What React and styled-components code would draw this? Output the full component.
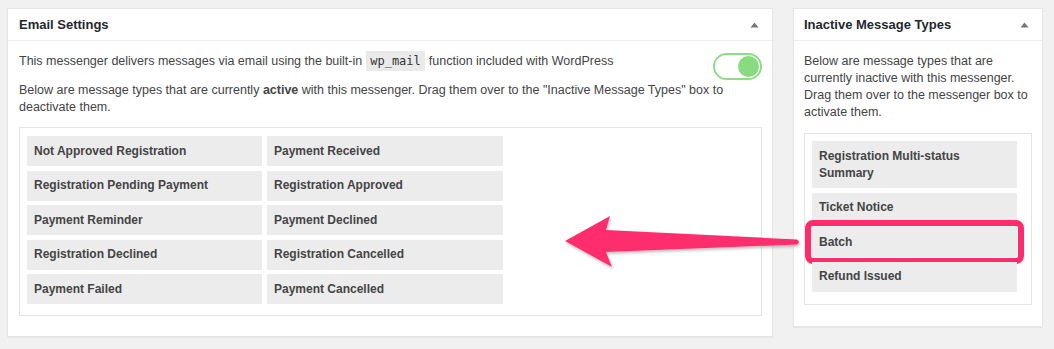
import React from "react";
import styled, { createGlobalStyle } from "styled-components";

const GlobalStyle = createGlobalStyle`
  body {
    margin: 0;
    background: #f1f1f1;
    font-family: "Liberation Sans", Arial, sans-serif;
    color: #444;
  }
`;

const Page = styled.div`
  position: relative;
  width: 1054px;
  height: 349px;
  box-sizing: border-box;
  padding: 8px 0 0 7px;
  display: flex;
  align-items: flex-start;
  gap: 20px;
`;

const Panel = styled.div`
  width: ${(p) => p.width}px;
  box-sizing: border-box;
  background: #fff;
  border: 1px solid #e5e5e5;
  box-shadow: 0 1px 1px rgba(0, 0, 0, 0.04);
  padding-bottom: ${(p) => p.bottom}px;
`;

const PanelHeader = styled.div`
  height: 31px;
  border-bottom: 1px solid #eee;
  display: flex;
  align-items: center;
  justify-content: space-between;
  padding: 0 13px 0 ${(p) => p.left}px;
`;

const Title = styled.h2`
  margin: 0;
  font-size: 13px;
  font-weight: 700;
  color: #23282d;
`;

const Body = styled.div`
  padding: 12px ${(p) => p.right}px 0 ${(p) => p.left}px;
`;

const TopRow = styled.div`
  display: flex;
  justify-content: space-between;
  align-items: flex-start;
`;

const Text = styled.p`
  margin: 0;
  font-size: 12.5px;
  line-height: 17px;
  color: #444;
  padding-top: ${(p) => p.top || 0}px;
`;

const Code = styled.code`
  font-family: "DejaVu Sans Mono", "Liberation Mono", monospace;
  font-size: 12px;
  background: #eaeaea;
  padding: 3px 4px;
  margin: 0 4px;
  color: #333;
`;

const Toggle = styled.div`
  width: 49px;
  height: 27px;
  box-sizing: border-box;
  border: 2px solid #8fdc87;
  border-radius: 14px;
  display: flex;
  align-items: center;
  justify-content: flex-end;
  padding-right: 1px;
`;

const Knob = styled.div`
  width: 21px;
  height: 21px;
  border-radius: 50%;
  background: #88dc7f;
`;

const TypeBox = styled.div`
  border: 1px solid #e5e5e5;
  margin-top: ${(p) => p.top}px;
  padding: ${(p) => p.pad};
  display: grid;
  grid-template-columns: ${(p) => p.cols};
  column-gap: 5px;
  row-gap: 4.5px;
`;

const TypeItem = styled.div`
  background: #ececec;
  font-size: 12px;
  font-weight: 700;
  color: #444;
  line-height: 17px;
  padding: 6.5px 7px;
  ${(p) =>
    p.highlight &&
    `
    outline: 6px solid #fe2c6c;
    outline-offset: 1px;
    border-radius: 1px;
  `}
`;

const Arrow = styled.svg`
  position: absolute;
  left: 555px;
  top: 205px;
  pointer-events: none;
  overflow: visible;
`;

const Caret = () => (
  <svg width="9" height="6" viewBox="0 0 9 6">
    <path d="M0.5 5.5 L4.5 0.5 L8.5 5.5 Z" fill="#72777c" />
  </svg>
);

const active = [
  "Not Approved Registration",
  "Payment Received",
  "Registration Pending Payment",
  "Registration Approved",
  "Payment Reminder",
  "Payment Declined",
  "Registration Declined",
  "Registration Cancelled",
  "Payment Failed",
  "Payment Cancelled",
];

const inactive = ["Registration Multi-status Summary", "Ticket Notice", "Batch", "Refund Issued"];

export default function App() {
  return (
    <>
      <GlobalStyle />
      <Page>
        <Panel width={766} bottom={20}>
          <PanelHeader left={11}>
            <Title>Email Settings</Title>
            <Caret />
          </PanelHeader>
          <Body left={11} right={10}>
            <TopRow>
              <Text>
                This messenger delivers messages via email using the built-in<Code>wp_mail</Code>
                function included with WordPress
              </Text>
              <Toggle>
                <Knob />
              </Toggle>
            </TopRow>
            <Text top={2}>
              Below are message types that are currently <b>active</b> with this messenger. Drag them
              over to the "Inactive Message Types" box to deactivate them.
            </Text>
            <TypeBox top={11} pad="8px 7px 11px" cols="235px 236px">
              {active.map((t) => (
                <TypeItem key={t}>{t}</TypeItem>
              ))}
            </TypeBox>
          </Body>
        </Panel>
        <Panel width={250} bottom={21}>
          <PanelHeader left={10}>
            <Title>Inactive Message Types</Title>
            <Caret />
          </PanelHeader>
          <Body left={10} right={10}>
            <Text>
              Below are message types that are currently inactive with this messenger. Drag them over
              to the messenger box to activate them.
            </Text>
            <TypeBox top={12} pad="7px 14px 12px 7px" cols="1fr">
              {inactive.map((t) => (
                <TypeItem key={t} highlight={t === "Batch"}>
                  {t}
                </TypeItem>
              ))}
            </TypeBox>
          </Body>
        </Panel>
        <Arrow width="260" height="70" viewBox="555 205 260 70">
          <defs>
            <filter id="sh" x="-10%" y="-30%" width="120%" height="160%">
              <feDropShadow dx="1" dy="2" stdDeviation="1.5" floodColor="#000" floodOpacity="0.25" />
            </filter>
          </defs>
          <path
            d="M565 241 L610 216 L606 230 L797 239.5 Q801 242 797 244.5 L606 252 L612 267 Z"
            fill="#fe2e6e"
            filter="url(#sh)"
          />
        </Arrow>
      </Page>
    </>
  );
}
